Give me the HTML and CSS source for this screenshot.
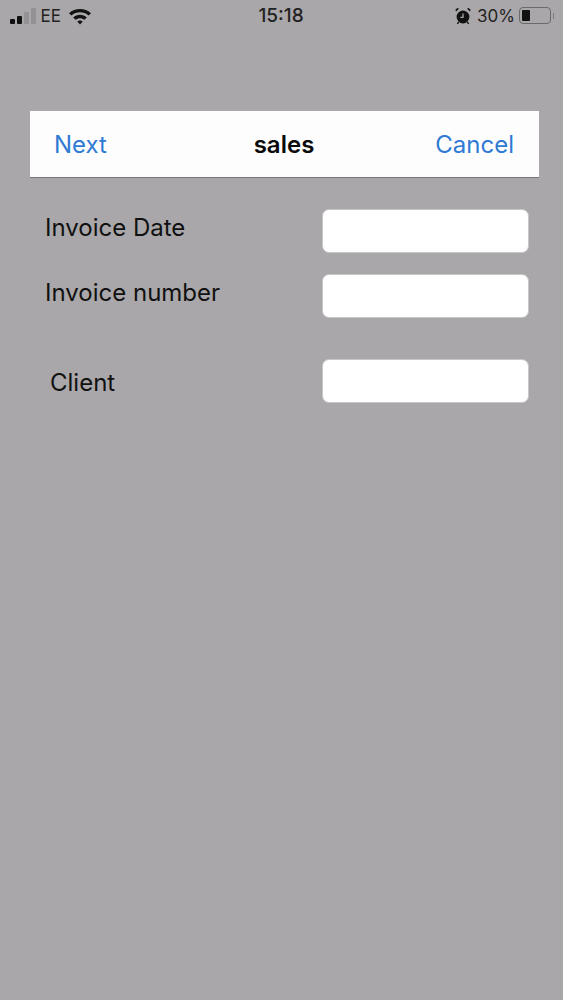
FILE: index.html
```html
<!DOCTYPE html>
<html lang="en">
<head>
    <meta charset="UTF-8">
    <meta name="viewport" content="width=device-width, initial-scale=1.0">
    <title>sales</title>
    <link rel="stylesheet" href="styles.css">
</head>
<body>
    <div class="status-bar">
        <div class="status-left">
            <div class="signal">
                <span class="on bar-1"></span>
                <span class="on bar-2"></span>
                <span class="bar-3"></span>
                <span class="bar-4"></span>
            </div>
            <span class="carrier">EE</span>
            <svg class="wifi" width="24" height="18" viewBox="0 0 24 18">
                <path d="M1 6.2 C7.2 .6 16.8 .6 23 6.2 L20.6 8.6 C15.6 4.2 8.4 4.2 3.4 8.6 Z" fill="#111"/>
                <path d="M5.2 10.4 C9.2 6.9 14.8 6.9 18.8 10.4 L16.4 12.8 C13.8 10.7 10.2 10.7 7.6 12.8 Z" fill="#111"/>
                <path d="M9.3 14.5 C10.9 13.3 13.1 13.3 14.7 14.5 L12 17.4 Z" fill="#111"/>
            </svg>
        </div>
        <div class="clock">15:18</div>
        <div class="status-right">
            <svg class="alarm" width="16" height="18" viewBox="0 0 16 18">
                <circle cx="8" cy="10" r="6.4" fill="#111"/>
                <path d="M1 4.6 L4 1.8 L2.4 1 L.4 2.8 Z M15 4.6 L12 1.8 L13.6 1 L15.6 2.8 Z" fill="#111"/>
                <path d="M3.6 15 L2.4 17 M12.4 15 L13.6 17" stroke="#111" stroke-width="1.4"/>
                <path d="M8 6.4 V10.4 H5.4" stroke="#a9a7a9" stroke-width="1.3" fill="none"/>
            </svg>
            <span class="percent">30%</span>
            <div class="battery"><div class="level"></div></div>
            <div class="battery-tip"></div>
        </div>
    </div>

    <div class="nav-bar">
        <a class="nav-link">Next</a>
        <h1>sales</h1>
        <a class="nav-link cancel">Cancel</a>
    </div>

    <form class="sales-form">
        <div class="form-row">
            <label for="invoice-date">Invoice Date</label>
            <input type="text" id="invoice-date">
        </div>
        <div class="form-row">
            <label for="invoice-number">Invoice number</label>
            <input type="text" id="invoice-number">
        </div>
        <div class="form-row client-row">
            <label for="client">Client</label>
            <input type="text" id="client">
        </div>
    </form>
</body>
</html>
```

FILE: styles.css
```css
* {
    margin: 0;
    padding: 0;
    box-sizing: border-box;
    font-family: 'Inter', 'Liberation Sans', sans-serif;
}

body {
    background-color: #a9a7a9;
    color: #111;
    height: 1000px;
    overflow: hidden;
}

.status-bar {
    display: grid;
    grid-template-columns: 1fr auto 1fr;
    align-items: center;
    height: 31px;
    padding: 0 9px 0 10px;
}

.status-left,
.status-right {
    display: flex;
    align-items: center;
}

.status-right {
    justify-content: flex-end;
}

.signal {
    display: flex;
    align-items: flex-end;
    gap: 2.5px;
    height: 18px;
    margin: 0 5px 2px 0;
}

.signal span {
    width: 4.5px;
    border-radius: 1px;
    background: #939193;
}

.signal .on {
    background: #111;
}

.bar-1 { height: 5px; }
.bar-2 { height: 8px; }
.bar-3 { height: 12px; }
.bar-4 { height: 16px; }

.carrier {
    font-size: 17px;
    color: #222;
    margin-right: 7px;
}

.clock {
    font-size: 19px;
    font-weight: 500;
    color: #222;
    transform: translateX(-1px);
}

.alarm {
    margin-right: 5px;
}

.percent {
    font-size: 17px;
    color: #222;
    margin-right: 4px;
    margin-left: 1px;
}

.battery {
    width: 32px;
    height: 17px;
    padding: 2px;
    border: 1px solid #6b696b;
    border-radius: 4px;
}

.level {
    width: 8px;
    height: 100%;
    border-radius: 1px;
    background: #111;
}

.battery-tip {
    width: 1px;
    height: 6px;
    margin-left: 2px;
    background: #7c7a7c;
}

.nav-bar {
    display: grid;
    grid-template-columns: 1fr auto 1fr;
    align-items: center;
    height: 67px;
    margin: 80px 24px 0 30px;
    padding: 0 25px 0 24px;
    background: #fdfdfe;
    border-bottom: 1px solid #77757a;
}

.nav-link {
    font-size: 24px;
    color: #2f7ad3;
}

.cancel {
    text-align: right;
}

.nav-bar h1 {
    font-size: 24px;
    font-weight: 600;
    color: #0a0a0a;
}

.sales-form {
    display: flex;
    flex-direction: column;
    gap: 21px;
    padding: 31px 34px 0 45px;
}

.form-row {
    display: flex;
    justify-content: space-between;
    align-items: center;
}

.form-row label {
    font-size: 24px;
    color: #111;
    padding-bottom: 8px;
}

.form-row input {
    width: 207px;
    height: 44px;
    background: #fff;
    border: 1px solid #c8c6c8;
    border-radius: 7px;
}

.client-row {
    margin-top: 20px;
}

.client-row label {
    padding: 2px 0 0 5px;
}
```
